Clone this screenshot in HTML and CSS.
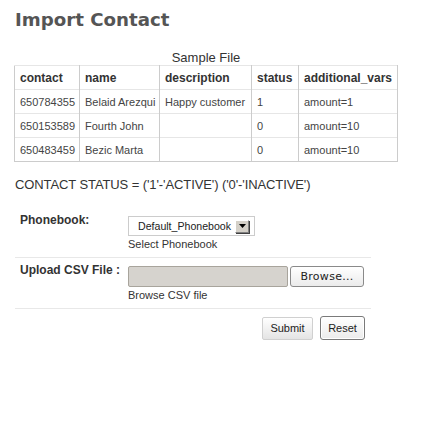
FILE: index.html
```html
<!DOCTYPE html>
<html>
<head>
<meta charset="utf-8">
<link rel="stylesheet" href="styles.css">
</head>
<body>
<div class="page">
  <h1 class="title">Import Contact</h1>
  <table class="sample">
    <caption>Sample File</caption>
    <colgroup>
      <col class="c1"><col class="c2"><col class="c3"><col class="c4"><col class="c5">
    </colgroup>
    <thead>
      <tr><th>contact</th><th>name</th><th>description</th><th>status</th><th>additional_vars</th></tr>
    </thead>
    <tbody>
      <tr><td>650784355</td><td>Belaid Arezqui</td><td>Happy customer</td><td>1</td><td>amount=1</td></tr>
      <tr><td>650153589</td><td>Fourth John</td><td></td><td>0</td><td>amount=10</td></tr>
      <tr><td>650483459</td><td>Bezic Marta</td><td></td><td>0</td><td>amount=10</td></tr>
    </tbody>
  </table>
  <p class="status-note">CONTACT STATUS = ('1'-'ACTIVE') ('0'-'INACTIVE')</p>
  <form class="form">
    <div class="form-row row1">
      <label class="label">Phonebook:</label>
      <div class="control">
        <div class="select"><span class="select-text">Default_Phonebook</span><span class="select-arrow"><svg width="7" height="4" viewBox="0 0 7 4"><path d="M0 0H7L3.5 4Z" fill="#000"/></svg></span></div>
        <div class="help">Select Phonebook</div>
      </div>
    </div>
    <div class="form-row row2">
      <label class="label">Upload CSV File :</label>
      <div class="control">
        <div class="file"><span class="file-box"></span><span class="file-btn">Browse...</span></div>
        <div class="help">Browse CSV file</div>
      </div>
    </div>
    <div class="actions">
      <button type="button" class="btn submit">Submit</button>
      <button type="button" class="btn reset">Reset</button>
    </div>
  </form>
</div>
</body>
</html>
```

FILE: styles.css
```css
html, body { margin: 0; padding: 0; background: #fff; }
body { font-family: "Liberation Sans", Arial, sans-serif; color: #333; }
.page { padding: 0 14px; }
.title {
  margin: 9px 0 0 1px;
  font-family: "DejaVu Sans", Verdana, sans-serif;
  font-weight: bold;
  font-size: 18.2px;
  line-height: 22px;
  color: #555;
}
.sample {
  margin-top: 19px;
  border-collapse: collapse;
  table-layout: fixed;
  width: 383px;
  border: 1px solid #ccc;
}
.sample caption {
  font-size: 13px;
  line-height: 15px;
  color: #333;
  text-align: center;
}
.c1 { width: 65px; }
.c2 { width: 80px; }
.c3 { width: 92px; }
.c4 { width: 47px; }
.c5 { width: 99px; }
.sample th, .sample td {
  padding: 0 5px;
  height: 23px;
  text-align: left;
  vertical-align: middle;
  border-left: 1px solid #ccc;
  border-right: 1px solid #ccc;
  border-top: 1px solid #e6e6e6;
  white-space: nowrap;
  overflow: hidden;
}
.sample th { font-size: 12px; font-weight: bold; color: #333; }
.sample td { font-size: 11px; color: #444; }
.status-note {
  margin: 15px 0 0 1px;
  font-size: 13px;
  line-height: 15px;
  letter-spacing: -0.1px;
  color: #333;
}
.form { margin: 17px 0 0 1px; width: 356px; }
.form-row {
  display: grid;
  grid-template-columns: 113px 1fr;
  border-bottom: 1px solid #e8e8e8;
}
.row1 { padding: 7px 0 6px 0; }
.row2 { padding: 8px 0 6px 0; }
.label {
  padding-left: 5px;
  margin-top: -3px;
  font-size: 12px;
  font-weight: bold;
  line-height: 14px;
  color: #333;
}
.control { display: flex; flex-direction: column; align-items: flex-start; }
.help { margin-top: 2px; font-size: 11px; line-height: 13px; color: #333; }
.select {
  box-sizing: border-box;
  width: 127px;
  height: 20px;
  border: 1px solid #ccc;
  display: flex;
  align-items: center;
  padding-left: 9px;
  font-size: 10.6px;
  color: #222;
  white-space: nowrap;
}
.select-text { flex: 1; }
.select-arrow {
  box-sizing: border-box;
  flex: none;
  width: 14px;
  height: 13px;
  margin-right: 5px;
  background: #d4d0c8;
  border-top: 1px solid #fff;
  border-left: 1px solid #fff;
  border-right: 1px solid #808080;
  border-bottom: 1px solid #808080;
  box-shadow: 1px 1px 0 #404040;
  display: flex;
  align-items: center;
  justify-content: center;
}
.file { display: flex; gap: 2px; height: 21px; }
.file-box {
  box-sizing: border-box;
  width: 160px;
  height: 21px;
  background: #d6d3ce;
  border: 1px solid #a8a49c;
  border-radius: 2px;
}
.file-btn {
  box-sizing: border-box;
  width: 74px;
  height: 21px;
  border: 1px solid #8a8a8a;
  border-radius: 3px;
  background: linear-gradient(#ffffff, #ebebeb);
  font-family: "DejaVu Sans", Verdana, sans-serif;
  font-size: 11px;
  letter-spacing: 0.3px;
  color: #222;
  display: flex;
  align-items: center;
  justify-content: center;
}
.actions {
  display: flex;
  justify-content: flex-end;
  align-items: center;
  gap: 7px;
  padding: 7px 6px 0 0;
}
.btn {
  font-family: "Liberation Sans", Arial, sans-serif;
  font-size: 11px;
  color: #222;
  padding: 0;
  margin: 0;
  cursor: pointer;
}
.submit {
  width: 51px;
  height: 23px;
  border: 1px solid #d0d0d0;
  border-radius: 2px;
  background: linear-gradient(#ffffff, #e4e4e4);
}
.reset {
  width: 45px;
  height: 24px;
  border: 1px solid #7a7a7a;
  border-radius: 3px;
  background: linear-gradient(#ffffff, #ebebeb);
  box-shadow: inset 0 0 0 1px #fff;
}
```
